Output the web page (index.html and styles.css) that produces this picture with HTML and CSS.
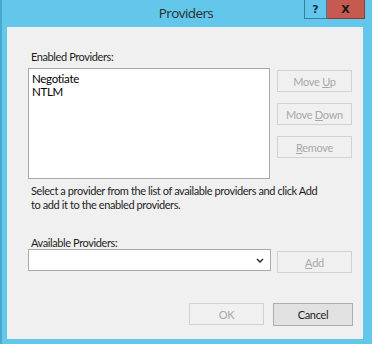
FILE: index.html
```html
<!DOCTYPE html>
<html lang="en">
<head>
    <meta charset="UTF-8">
    <meta name="viewport" content="width=device-width, initial-scale=1.0">
    <title>Providers</title>
    <link rel="stylesheet" href="styles.css">
</head>
<body>
    <div class="window">
        <div class="title-bar">
            <span class="title">Providers</span>
            <div class="caption-buttons">
                <span class="caption-btn help-btn">?</span>
                <span class="caption-btn close-btn">X</span>
            </div>
        </div>
        <div class="client">
            <div class="field-label">Enabled Providers:</div>
            <div class="list-row">
                <div class="list-box">
                    <div class="list-item">Negotiate</div>
                    <div class="list-item">NTLM</div>
                </div>
                <div class="side-buttons">
                    <button class="btn" disabled>Move <u>U</u>p</button>
                    <button class="btn" disabled>Move <u>D</u>own</button>
                    <button class="btn" disabled><u>R</u>emove</button>
                </div>
            </div>
            <p class="hint">Select a provider from the list of available providers and click Add<br>to add it to the enabled providers.</p>
            <div class="field-label">Available Providers:</div>
            <div class="combo-row">
                <div class="combo">
                    <svg class="chevron" width="8" height="5" viewBox="0 0 8 5"><path d="M1 1 L4 4 L7 1" fill="none" stroke="#222" stroke-width="1.4"/></svg>
                </div>
                <button class="btn add-btn" disabled><u>A</u>dd</button>
            </div>
            <div class="footer">
                <button class="btn" disabled>OK</button>
                <button class="btn cancel-btn">Cancel</button>
            </div>
        </div>
    </div>
</body>
</html>
```

FILE: styles.css
```css
body {
    margin: 0;
    font-family: Lato, 'Liberation Sans', sans-serif;
    font-size: 11px;
    letter-spacing: -0.4px;
    color: #1e1e1e;
}
.window {
    width: 372px;
    height: 344px;
    background-color: #62c7ea;
    border-left: 2px solid #4aa8cc;
    box-sizing: border-box;
    display: flex;
    flex-direction: column;
}
.title-bar {
    position: relative;
    height: 27px;
    display: flex;
    align-items: center;
    justify-content: center;
}
.title {
    font-family: 'Open Sans', sans-serif;
    font-size: 13.5px;
    letter-spacing: -0.6px;
    color: #2b2b2b;
    margin-left: -2px;
    margin-top: -1px;
}
.caption-buttons {
    position: absolute;
    top: 0;
    right: 7px;
    display: flex;
}
.caption-btn {
    height: 19px;
    display: flex;
    align-items: center;
    justify-content: center;
    font-family: 'DejaVu Sans', sans-serif;
    font-weight: bold;
    font-size: 11px;
    letter-spacing: 0;
    box-sizing: border-box;
}
.help-btn {
    width: 23px;
    background-color: #62c7ea;
    border: 1px solid #3a7ca4;
    border-top: none;
    color: #1a2c50;
}
.close-btn {
    width: 38px;
    background-color: #c75a50;
    border: 1px solid #8f3a34;
    border-left: none;
    border-top: none;
    color: #1a1a1a;
}
.client {
    flex: 1;
    margin: 0 9px 5px 5px;
    background-color: #f0f0f0;
    padding: 23px 10px 0 21px;
}
.field-label {
    line-height: 14px;
    padding-left: 3px;
}
.list-row {
    display: flex;
    gap: 7px;
    margin-top: 4px;
}
.list-box {
    width: 242px;
    height: 111px;
    box-sizing: border-box;
    background-color: white;
    border: 1px solid #a8a8a8;
    padding: 3px 3px;
    font-size: 11.5px;
    letter-spacing: -0.3px;
    color: #000;
}
.list-item {
    line-height: 13px;
}
.side-buttons {
    display: flex;
    flex-direction: column;
    gap: 11px;
    padding-top: 2px;
}
.btn {
    width: 75px;
    height: 22px;
    box-sizing: border-box;
    background-color: #f0f0f0;
    border: 1px solid #d2d2d2;
    color: #a8a8a8;
    font-family: inherit;
    font-size: 11px;
    letter-spacing: -0.3px;
    padding: 0;
}
.btn u {
    text-underline-offset: 1px;
}
.hint {
    margin: 5px 0 0;
    padding-left: 3px;
    line-height: 14px;
}
.hint + .field-label {
    margin-top: 24px;
}
.combo-row {
    display: flex;
    gap: 6px;
    margin-top: -1px;
}
.combo {
    width: 243px;
    height: 22px;
    box-sizing: border-box;
    background-color: white;
    border: 1px solid #ababab;
    display: flex;
    align-items: center;
    justify-content: flex-end;
    padding-right: 6px;
}
.add-btn {
    margin-top: 2px;
}
.footer {
    display: flex;
    justify-content: flex-end;
    gap: 9px;
    margin-top: 30px;
}
.cancel-btn {
    width: 80px;
    height: 23px;
    background-color: #e1e1e1;
    border-color: #adadad;
    color: #1e1e1e;
}
```
